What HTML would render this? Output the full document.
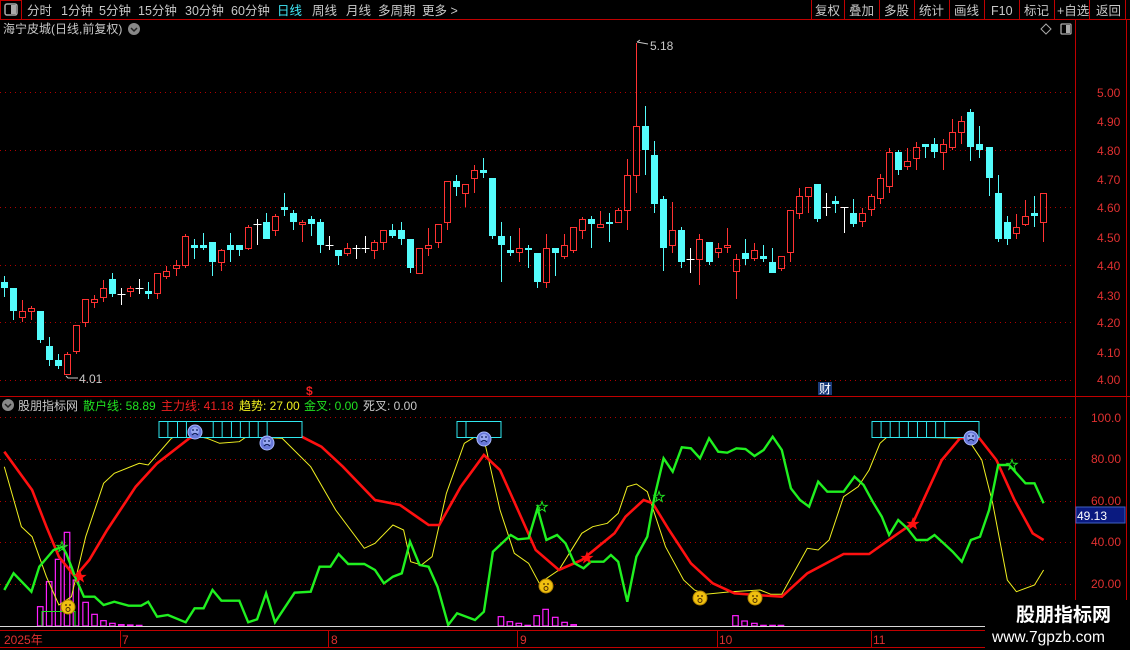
<!DOCTYPE html>
<html><head><meta charset="utf-8">
<style>
html,body{margin:0;padding:0;background:#000;width:1130px;height:650px;overflow:hidden;font-family:"Liberation Sans","Noto Sans CJK SC",sans-serif;}
svg{display:block}
</style></head><body>
<svg id="s" width="1130" height="650" xmlns="http://www.w3.org/2000/svg" font-family="Liberation Sans, Noto Sans CJK SC, sans-serif">
<rect width="1130" height="650" fill="#000"/>
<line x1="0" y1="19.5" x2="1130" y2="19.5" stroke="#c00000"/>
<rect x="0.5" y="0.5" width="21" height="19" fill="none" stroke="#c00000"/>
<rect x="5" y="4" width="12" height="11" rx="2" fill="none" stroke="#aaa" stroke-width="1.5"/>
<rect x="11" y="5" width="5" height="9" fill="#aaa"/>
<g font-size="12.5" fill="#c8c8c8">
<text x="27" y="15">分时</text><text x="61" y="15">1分钟</text><text x="99" y="15">5分钟</text>
<text x="138" y="15">15分钟</text><text x="185" y="15">30分钟</text><text x="231" y="15">60分钟</text>
<text x="277" y="15" fill="#40e8f8">日线</text><text x="312" y="15">周线</text><text x="346" y="15">月线</text>
<text x="378" y="15">多周期</text><text x="422" y="15">更多 &gt;</text>
<text x="815" y="15">复权</text><text x="849" y="15">叠加</text><text x="884" y="15">多股</text>
<text x="919" y="15">统计</text><text x="954" y="15">画线</text><text x="991" y="15">F10</text>
<text x="1024" y="15">标记</text><text x="1057" y="15">+自选</text><text x="1096" y="15">返回</text>
</g>
<g stroke="#c00000">
<line x1="811.5" y1="0" x2="811.5" y2="19"/><line x1="844.5" y1="0" x2="844.5" y2="19"/>
<line x1="879.5" y1="0" x2="879.5" y2="19"/><line x1="914.5" y1="0" x2="914.5" y2="19"/>
<line x1="949.5" y1="0" x2="949.5" y2="19"/><line x1="984.5" y1="0" x2="984.5" y2="19"/>
<line x1="1019.5" y1="0" x2="1019.5" y2="19"/><line x1="1054.5" y1="0" x2="1054.5" y2="19"/>
<line x1="1089.5" y1="0" x2="1089.5" y2="19"/><line x1="1125.5" y1="0" x2="1125.5" y2="19"/>
</g>
<text x="3" y="33" font-size="12" fill="#c8c8c8">海宁皮城(日线,前复权)</text>
<circle cx="134" cy="29" r="6" fill="#888"/>
<path d="M131 28 L134 31 L137 28" stroke="#222" stroke-width="1.5" fill="none"/>
<path d="M1046 24 L1051 29 L1046 34 L1041 29 Z" stroke="#aaa" fill="none"/>
<rect x="1061" y="24" width="10" height="10" rx="1" fill="none" stroke="#aaa" stroke-width="1.3"/>
<rect x="1066" y="25" width="4" height="8" fill="#aaa"/>
<line x1="1075.5" y1="20" x2="1075.5" y2="650" stroke="#c00000"/>
<line x1="1126.5" y1="20" x2="1126.5" y2="650" stroke="#c00000"/>
<line x1="0" y1="396.5" x2="1130" y2="396.5" stroke="#c00000"/>
<g id="grid" stroke="#b00000" stroke-dasharray="1,4"></g>
<g id="c"></g>
<g font-size="12" fill="#e03030">
<text x="1097" y="97">5.00</text><text x="1097" y="126">4.90</text><text x="1097" y="155">4.80</text>
<text x="1097" y="184">4.70</text><text x="1097" y="212">4.60</text><text x="1097" y="242">4.50</text>
<text x="1097" y="270">4.40</text><text x="1097" y="300">4.30</text><text x="1097" y="327">4.20</text>
<text x="1097" y="357">4.10</text><text x="1097" y="384">4.00</text>
<text x="1091" y="422">100.0</text><text x="1091" y="463">80.00</text><text x="1091" y="505">60.00</text>
<text x="1091" y="546">40.00</text><text x="1091" y="588">20.00</text>
</g>
<text x="79" y="383" font-size="12" fill="#c8c8c8">4.01</text>
<path d="M66 376 L68 378 L78 378" stroke="#c8c8c8" fill="none"/>
<text x="650" y="50" font-size="12" fill="#c8c8c8">5.18</text>
<path d="M637 42 L640 40 M637 42 L648 44" stroke="#c8c8c8" fill="none"/>
<text x="306" y="395" font-size="12" font-weight="bold" fill="#f02020">$</text>
<rect x="818" y="382" width="14" height="13" fill="#1a3a7a"/>
<text x="819" y="393" font-size="12" fill="#fff">财</text>
<circle cx="8" cy="405" r="6" fill="#888"/>
<path d="M5 404 L8 407 L11 404" stroke="#222" stroke-width="1.5" fill="none"/>
<g font-size="12">
<text x="18" y="410" fill="#c8c8c8">股朋指标网</text>
<text x="83" y="410" fill="#20e020">散户线: 58.89</text>
<text x="161" y="410" fill="#f02020">主力线: 41.18</text>
<text x="239" y="410" fill="#f0f020">趋势: 27.00</text>
<text x="304" y="410" fill="#20e020">金叉: 0.00</text>
<text x="363" y="410" fill="#c8c8c8">死叉: 0.00</text>
</g>
<g id="ind"></g>
<line x1="0" y1="626.5" x2="1075" y2="626.5" stroke="#d8d8d8"/>
<line x1="0" y1="630.5" x2="1075" y2="630.5" stroke="#c00000"/>
<line x1="0" y1="647.5" x2="1075" y2="647.5" stroke="#c00000"/>
<g stroke="#c00000"><line x1="120.5" y1="630" x2="120.5" y2="647"/><line x1="328.5" y1="630" x2="328.5" y2="647"/><line x1="517.5" y1="630" x2="517.5" y2="647"/><line x1="717.5" y1="630" x2="717.5" y2="647"/><line x1="871.5" y1="630" x2="871.5" y2="647"/></g>
<g font-size="12" fill="#e03030">
<text x="4" y="644">2025年</text><text x="122" y="644">7</text><text x="331" y="644">8</text>
<text x="520" y="644">9</text><text x="719" y="644">10</text><text x="873" y="644">11</text>
</g>
<rect x="1076" y="507" width="49" height="16" fill="#0a1a80" stroke="#4060c0"/>
<text x="1077" y="520" font-size="12" fill="#fff">49.13</text>
<rect x="985" y="600" width="145" height="50" fill="#000"/>
<text x="1016" y="621" font-size="19" font-weight="bold" fill="#fff">股朋指标网</text>
<text x="992" y="642" font-size="15.5" fill="#fff">www.7gpzb.com</text>
</svg>
<script>
var NS="http://www.w3.org/2000/svg";
function el(p,t,a){var e=document.createElementNS(NS,t);for(var k in a)e.setAttribute(k,a[k]);document.getElementById(p).appendChild(e);return e;}
[92,150,207,265,322,380].forEach(function(y){el('grid','line',{x1:0,y1:y+.5,x2:1075,y2:y+.5});});
[417,459,501,542,584].forEach(function(y){el('grid','line',{x1:0,y1:y+.5,x2:1075,y2:y+.5});});
var C=[[4,276,282,288,297,'c'],[13,288,288,311,320,'c'],[22,300,311,318,322,'r'],[31,306,308,312,320,'r'],[40,311,311,340,343,'c'],[49,337,346,360,366,'c'],[58,354,360,366,369,'c'],[67,352,354,375,375,'r'],[76,325,325,352,354,'r'],[85,299,299,323,327,'r'],[94,295,299,303,308,'r'],[103,280,288,298,302,'r'],[112,273,279,294,297,'c'],[121,288,294,294,305,'w'],[130,286,288,292,297,'r'],[139,279,288,288,294,'w'],[148,282,291,294,299,'c'],[157,273,273,294,299,'r'],[166,266,271,277,279,'r'],[176,260,265,269,276,'r'],[185,234,236,266,268,'r'],[194,239,245,248,259,'c'],[203,233,245,248,250,'c'],[212,242,242,262,276,'c'],[221,249,250,263,271,'r'],[230,233,245,250,262,'c'],[239,245,245,250,256,'c'],[248,225,227,249,250,'r'],[257,219,224,224,245,'w'],[266,213,222,239,239,'c'],[275,214,216,231,236,'r'],[284,193,207,210,216,'c'],[293,210,213,222,230,'c'],[302,220,222,225,242,'r'],[311,216,219,224,236,'c'],[320,219,222,245,253,'c'],[329,236,245,245,250,'w'],[338,250,250,256,265,'c'],[347,243,248,254,256,'r'],[356,245,248,248,259,'w'],[365,236,248,248,253,'w'],[374,240,242,251,259,'r'],[383,230,230,243,250,'r'],[392,224,230,236,238,'c'],[401,222,230,239,245,'c'],[410,239,239,268,273,'c'],[419,248,248,274,274,'r'],[428,228,245,249,256,'r'],[438,224,224,243,248,'r'],[447,181,181,223,230,'r'],[456,175,181,187,196,'c'],[465,184,184,194,207,'r'],[474,165,170,179,193,'r'],[483,158,170,173,178,'c'],[492,178,178,236,239,'c'],[501,222,236,245,282,'c'],[510,236,250,253,256,'c'],[519,228,248,253,262,'r'],[528,245,248,250,268,'c'],[537,253,253,282,288,'c'],[546,234,248,283,288,'r'],[555,248,248,253,276,'c'],[564,234,245,257,259,'r'],[573,227,227,251,253,'r'],[582,217,219,231,239,'r'],[591,216,219,224,248,'c'],[600,211,224,228,228,'r'],[609,213,222,224,242,'c'],[618,208,210,223,223,'r'],[627,159,175,211,230,'r'],[636,43,126,176,193,'r'],[645,106,126,150,175,'c'],[654,141,155,204,213,'c'],[663,196,199,248,271,'c'],[672,202,230,246,253,'r'],[681,227,230,262,268,'c'],[690,248,259,259,273,'w'],[699,234,239,260,285,'r'],[709,242,242,262,265,'c'],[718,243,248,253,258,'r'],[727,228,245,248,253,'r'],[736,254,259,272,299,'r'],[745,239,253,259,265,'c'],[754,243,250,259,261,'r'],[763,245,256,259,262,'c'],[772,248,262,273,273,'c'],[781,256,256,269,271,'r'],[790,210,210,253,262,'r'],[799,188,196,214,219,'r'],[808,187,187,197,213,'r'],[817,184,184,219,222,'c'],[826,193,207,207,216,'w'],[835,196,201,204,213,'c'],[844,207,207,207,233,'w'],[853,199,213,224,227,'c'],[862,208,213,222,227,'r'],[871,194,196,210,216,'r'],[880,174,178,199,204,'r'],[889,148,152,187,193,'r'],[898,150,152,170,175,'c'],[907,148,161,167,170,'r'],[916,142,147,159,170,'r'],[925,144,144,147,158,'c'],[934,138,144,152,158,'c'],[943,139,144,153,170,'r'],[952,119,132,148,150,'r'],[961,116,121,133,144,'r'],[970,109,112,147,161,'c'],[979,126,144,150,158,'c'],[989,147,147,178,196,'c'],[998,175,193,239,242,'c'],[1007,216,222,239,245,'c'],[1016,214,227,234,239,'r'],[1025,200,216,225,226,'r'],[1034,196,213,216,227,'c'],[1043,193,193,223,242,'r']];
C.forEach(function(k){var x=k[0]+.5,col=k[5]=='c'?'#54fcfc':(k[5]=='r'?'#ff3232':'#ffffff');
 if(k[5]=='w'){el('c','line',{x1:x,y1:k[1],x2:x,y2:k[4],stroke:col});el('c','line',{x1:x-4,y1:k[2]+.5,x2:x+4,y2:k[2]+.5,stroke:col});return;}
 if(k[5]=='c'){el('c','line',{x1:x,y1:k[1],x2:x,y2:k[4],stroke:col});el('c','rect',{x:k[0]-3,y:k[2],width:7,height:Math.max(2,k[3]-k[2]),fill:col});}
 else{el('c','line',{x1:x,y1:k[1],x2:x,y2:k[2],stroke:col});el('c','line',{x1:x,y1:k[3],x2:x,y2:k[4],stroke:col});el('c','rect',{x:k[0]-2.5,y:k[2]+.5,width:6,height:Math.max(1,k[3]-k[2]-1),fill:'none',stroke:col});}
});
function A(z){return [z[0]/2.8,410+z[1]/3];} function B(z){return [560+z[0]/2.75,410+z[1]/3];}
function pts(a,b){var r=[];a.forEach(function(p){r.push(A(p));});b.forEach(function(p){r.push(B(p));});return r.map(function(p){return p[0].toFixed(1)+','+p[1].toFixed(1);}).join(' ');}
var bars8=[[105,590],[130,515],[155,448],[180,367],[205,510],[232,577],[257,613],[282,632],[307,640],[332,644],[357,645],[382,646],[1395,620],[1420,635],[1445,640],[1470,646],[1495,617],[1520,598],[1547,622]];
bars8.forEach(function(b){var p=A(b);el('ind','rect',{x:p[0],y:p[1],width:5.5,height:626-p[1],fill:'none',stroke:'#ff20ff','stroke-width':1.2});});
[[5,637],[30,644],[475,617],[500,633],[527,640],[552,646],[577,646],[600,646]].forEach(function(b){var p=B(b);el('ind','rect',{x:p[0],y:p[1],width:5.5,height:626-p[1],fill:'none',stroke:'#ff20ff','stroke-width':1.2});});
el('ind','rect',{x:42,y:611.5,width:33,height:15,fill:'none',stroke:'#20e020'});
var yel8=[[12,170],[60,350],[90,380],[130,500],[165,585],[200,560],[240,380],[290,220],[320,190],[390,160],[415,165],[480,85],[510,70],[580,85],[615,100],[670,95],[690,80],[790,85],[870,170],[940,300],[1020,415],[1050,400],[1100,345],[1130,360],[1150,455],[1180,465],[1210,440],[1250,250],[1300,100],[1330,80],[1360,110],[1400,300],[1440,430],[1480,460],[1510,520],[1565,480]];
var yel9=[[60,370],[90,350],[130,340],[160,310],[185,230],[210,222],[240,245],[290,410],[340,510],[370,540],[400,553],[470,545],[550,540],[580,553],[610,553],[680,415],[710,420],[740,390],[780,260],[820,230],[850,180],[880,100],[900,80],[1120,85],[1160,150],[1190,280],[1230,510],[1255,545],[1305,525],[1330,480]];
var red8=[[12,125],[90,240],[130,350],[165,440],[210,500],[250,450],[300,360],[380,230],[440,160],[530,85],[545,80],[845,80],[900,110],[960,170],[1050,270],[1120,285],[1160,315],[1200,345],[1230,345],[1290,230],[1355,135],[1400,180],[1450,300],[1500,420],[1565,480]];
var red9=[[60,450],[150,370],[180,320],[230,270],[255,280],[300,360],[360,460],[420,520],[480,550],[540,555],[610,560],[680,490],[780,432],[850,432],[930,370],[970,340],[1050,150],[1100,85],[1150,80],[1200,150],[1250,270],[1300,370],[1330,390]];
var gr8=[[12,540],[38,490],[88,545],[110,470],[150,420],[175,410],[185,430],[200,470],[210,500],[235,560],[265,560],[290,585],[320,575],[360,587],[395,587],[415,575],[440,620],[470,615],[520,637],[545,595],[570,595],[595,540],[620,572],[670,572],[695,637],[720,628],[745,550],[770,637],[825,548],[870,545],[895,470],[925,470],[948,432],[975,462],[1020,462],[1050,480],[1075,520],[1100,500],[1125,490],[1148,395],[1175,465],[1200,470],[1225,530],[1255,645],[1280,610],[1330,630],[1355,605],[1380,425],[1430,375],[1450,388],[1480,385],[1505,295],[1530,390],[1560,375]];
var gr9=[[15,400],[40,460],[65,475],[85,455],[120,455],[140,435],[160,455],[185,575],[210,440],[240,380],[260,260],[285,145],[310,185],[335,112],[360,115],[385,145],[410,85],[435,125],[460,128],[485,115],[510,117],[535,138],[560,120],[585,80],[610,120],[635,235],[660,270],[685,290],[710,215],[735,245],[780,245],[810,200],[835,225],[860,275],[885,320],[905,375],[930,330],[955,355],[980,390],[1010,390],[1030,375],[1055,400],[1080,425],[1105,455],[1130,390],[1155,380],[1180,300],[1205,165],[1235,165],[1280,220],[1305,220],[1330,280]];
el('ind','polyline',{points:pts(yel8,yel9),fill:'none',stroke:'#f0f020','stroke-width':1});
el('ind','polyline',{points:pts(red8,red9),fill:'none',stroke:'#ff1010','stroke-width':2.6});
el('ind','polyline',{points:pts(gr8,gr9),fill:'none',stroke:'#20f020','stroke-width':2.4});
function box(x1,x2,divs){el('ind','rect',{x:x1,y:421.5,width:x2-x1,height:16,fill:'#000',stroke:'#30e8f0'});divs.forEach(function(d){el('ind','line',{x1:d,y1:421.5,x2:d,y2:437.5,stroke:'#30e8f0'});});}
box(159,302,[470,497,522,597,622,648,673,698,723,748].map(function(v){return v/2.8;}));
box(457,501,[466]);
box(872,979,[883,908,933,958,983,1008,1033,1058].map(function(v){return 560+v/2.75;}));
function sad(x,y){el('ind','circle',{cx:x,cy:y,r:7,fill:'#6878d8',stroke:'#a8b8ff'});el('ind','circle',{cx:x,cy:y-1,r:4,fill:'#98a8f0'});el('ind','path',{d:'M'+(x-3)+' '+(y-2)+'h2M'+(x+1)+' '+(y-2)+'h2M'+(x-3)+' '+(y+3)+'q3 -3 6 0',stroke:'#102060','stroke-width':1.2,fill:'none'});}
function happy(x,y){el('ind','circle',{cx:x,cy:y,r:7,fill:'#f0c010',stroke:'#b08000'});el('ind','path',{d:'M'+(x-3)+' '+(y-2)+'h2M'+(x+1)+' '+(y-2)+'h2',stroke:'#503000','stroke-width':1.2});el('ind','circle',{cx:x,cy:y+2.5,r:2,fill:'none',stroke:'#503000'});}
sad(195,432);sad(267,443);sad(484,439);sad(971,438);
happy(68,607);happy(546,586);happy(700,598);happy(755,598);
function star(x,y,f,s){var d='';for(var i=0;i<10;i++){var r=i%2?2.2:5.5,a=-Math.PI/2+i*Math.PI/5;d+=(i?'L':'M')+(x+r*Math.cos(a)).toFixed(1)+' '+(y+r*Math.sin(a)).toFixed(1);}el('ind','path',{d:d+'Z',fill:f,stroke:s,'stroke-width':1});}
star(62,547,'none','#20e020');star(542,507,'none','#20e020');star(659,497,'none','#20e020');star(1012,465,'none','#20e020');
star(80,577,'#ff1010','#ff1010');star(587,558,'#ff1010','#ff1010');star(913,524,'#ff1010','#ff1010');
</script>
</body></html>
